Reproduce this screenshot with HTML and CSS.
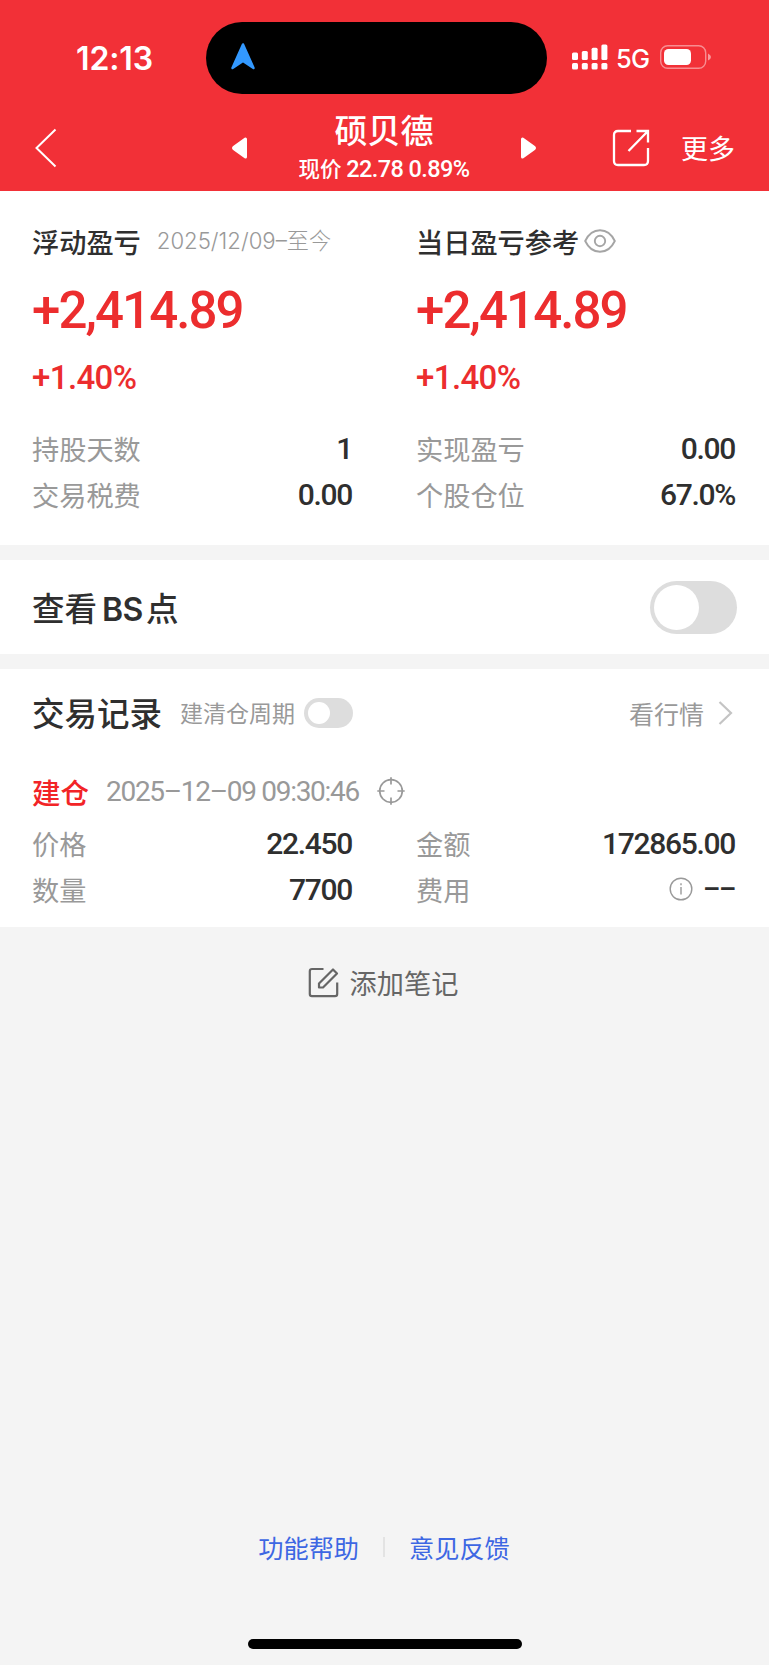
FILE: index.html
```html
<!DOCTYPE html>
<html lang="zh-CN">
<head>
  <meta charset="UTF-8" />
  <meta name="viewport" content="width=device-width, initial-scale=1.0"/>
  <title>硕贝德</title>
  <link rel="stylesheet" href="styles.css">
</head>
<body>

  <!-- Header -->
  <header class="header">
    <div class="status-bar">
      <span class="time">12:13</span>
      <div class="island">
        <svg width="26" height="28" viewBox="0 0 26 28"><path d="M13 2.500 L23.500 26 L13 19 L2.500 26 Z" fill="#3399ff" stroke="#3399ff" stroke-width="2.500" stroke-linejoin="round"/></svg>
      </div>
      <div class="status-right">
        <svg width="36" height="26" viewBox="0 0 36 26" fill="#fff">
          <rect x="0" y="8.500" width="6" height="7.500" rx="1.500"/><rect x="0" y="19" width="6" height="6.500" rx="1.500"/>
          <rect x="9.800" y="7" width="6" height="9" rx="1.500"/><rect x="9.800" y="19" width="6" height="6.500" rx="1.500"/>
          <rect x="19.600" y="3.700" width="6" height="12.300" rx="1.500"/><rect x="19.600" y="19" width="6" height="6.500" rx="1.500"/>
          <rect x="29.400" y="0.500" width="6" height="15.500" rx="1.500"/><rect x="29.400" y="19" width="6" height="6.500" rx="1.500"/>
        </svg>
        <span class="network">5G</span>
        <svg width="52" height="24" viewBox="0 0 52 24">
          <rect x="0.700" y="0.700" width="45" height="22.600" rx="7" fill="none" stroke="#fff" stroke-opacity="0.450" stroke-width="1.400"/>
          <rect x="4" y="4" width="27" height="16" rx="4.500" fill="#fff"/>
          <path d="M48 8.500 Q51 10 51 12 Q51 14 48 15.500 Z" fill="#fff" fill-opacity="0.500"/>
        </svg>
      </div>
    </div>
    <div class="nav">
      <svg class="back" width="24" height="40" viewBox="0 0 24 40"><path d="M21.500 1.500 L2.500 20 L21.500 38.500" fill="none" stroke="#fff" stroke-width="2"/></svg>
      <div class="stock">
        <svg width="18" height="24" viewBox="0 0 18 24"><path d="M14.500 3 V21 L3 12.800 Q2 12 3 11.200 Z" fill="#fff" stroke="#fff" stroke-width="3" stroke-linejoin="round"/></svg>
        <div class="stock-info">
          <h1>硕贝德</h1>
          <p>现价 <span>22.78 0.89%</span></p>
        </div>
        <svg width="18" height="24" viewBox="0 0 18 24"><path d="M3.500 3 V21 L15 12.800 Q16 12 15 11.200 Z" fill="#fff" stroke="#fff" stroke-width="3" stroke-linejoin="round"/></svg>
      </div>
      <div class="nav-right">
        <svg width="38" height="38" viewBox="0 0 38 38" fill="none" stroke="#fff" stroke-width="2.300"><path d="M19 2 H6 Q2 2 2 6 V32 Q2 36 6 36 H32 Q36 36 36 32 V19"/><path d="M24.500 2 H36 V13.500 M36 2 L16.500 22"/></svg>
        <span class="more">更多</span>
      </div>
    </div>
  </header>

  <!-- Profit and loss -->
  <section class="card profit">
    <div class="col">
      <h2 class="profit-title">浮动盈亏 <small>2025/12/09–至今</small></h2>
      <div class="amount">+2,414.89</div>
      <div class="percent">+1.40%</div>
      <div class="row"><span>持股天数</span><b>1</b></div>
      <div class="row"><span>交易税费</span><b>0.00</b></div>
    </div>
    <div class="col">
      <h2 class="profit-title">当日盈亏参考
        <svg class="eye" width="32" height="24" viewBox="0 0 32 24" fill="none" stroke="#a5a5a5" stroke-width="1.900"><path d="M1.200 12 C4.500 5 10 1.200 16 1.200 S27.500 5 30.800 12 C27.500 19 22 22.800 16 22.800 S4.500 19 1.200 12 Z"/><circle cx="16" cy="12" r="5.200"/></svg>
      </h2>
      <div class="amount">+2,414.89</div>
      <div class="percent">+1.40%</div>
      <div class="row"><span>实现盈亏</span><b>0.00</b></div>
      <div class="row"><span>个股仓位</span><b>67.0%</b></div>
    </div>
  </section>

  <!-- BS points -->
  <section class="card bs">
    <h2>查看<span class="latin">BS</span>点</h2>
    <div class="toggle"></div>
  </section>

  <!-- Trade records -->
  <section class="card records">
    <div class="records-head">
      <h2>交易记录</h2>
      <span class="cycle">建清仓周期</span>
      <div class="toggle toggle-small"></div>
      <a class="quotes">看行情
        <svg width="15" height="26" viewBox="0 0 15 26"><path d="M1.500 2 L13 13 L1.500 24" fill="none" stroke="#c4c4c4" stroke-width="2.200"/></svg>
      </a>
    </div>
    <div class="trade-head">
      <strong>建仓</strong>
      <time>2025<i>–</i>12<i>–</i>09 09:30:46</time>
      <svg width="28" height="28" viewBox="0 0 28 28" fill="none" stroke="#999" stroke-width="1.700"><circle cx="14" cy="14" r="11.300"/><path d="M14 0.300 V7.500 M14 20.500 V27.700 M0.300 14 H7.500 M20.500 14 H27.700"/></svg>
    </div>
    <div class="trade">
      <div class="row"><span>价格</span><b>22.450</b></div>
      <div class="row"><span>金额</span><b>172865.00</b></div>
      <div class="row"><span>数量</span><b>7700</b></div>
      <div class="row"><span>费用</span>
        <div class="fee">
          <svg width="24" height="24" viewBox="0 0 24 24" fill="none" stroke="#999" stroke-width="1.400"><circle cx="12" cy="12" r="10.800"/><path d="M12 10 V17.500 M12 6.300 V8.200"/></svg>
          <b class="dash">––</b>
        </div>
      </div>
    </div>
  </section>

  <a class="add-note">
    <svg width="31" height="31" viewBox="0 0 31 31" fill="none" stroke="#666" stroke-width="2.200"><path d="M15.500 2 H4 Q1.800 2 1.800 4.200 V27 Q1.800 29.200 4 29.200 H27 Q29.200 29.200 29.200 27 V15.500"/><path d="M11 20.500 V16.500 L25 2.500 L29 6.500 L15 20.500 Z" stroke-linejoin="round"/></svg>
    添加笔记
  </a>

  <footer class="footer">
    <div class="links">
      <a>功能帮助</a>
      <span class="divider"></span>
      <a>意见反馈</a>
    </div>
    <div class="home-bar"></div>
  </footer>

</body>
</html>
```
FILE: styles.css
```css
* {
  box-sizing: border-box;
}

body {
  margin: 0;
  height: 1665px;
  display: flex;
  flex-direction: column;
  background: #f4f4f4;
  color: #2f2f2f;
  font-family: 'Noto Sans CJK SC', sans-serif;
}

h1, h2, p {
  margin: 0;
  font-weight: 500;
}

svg {
  display: block;
  flex: none;
}

/* Header */
.header {
  height: 191px;
  background: #f23037;
  color: white;
}

.status-bar {
  height: 94px;
  padding: 22px 57px 0 76px;
  display: flex;
  align-items: center;
}

.time {
  width: 130px;
  font: 600 32px Inter, sans-serif;
  letter-spacing: -0.1px;
}

.island {
  width: 342px;
  height: 72px;
  padding: 20px 24px;
  border-radius: 36px;
  background: black;
}

.status-right {
  flex: 1;
  margin: -2px 0 0 25px;
  display: flex;
  align-items: center;
}

.network {
  width: 52px;
  padding: 2px 0 0 8px;
  font: 500 25.5px Inter, sans-serif;
  letter-spacing: -0.8px;
}

.nav {
  height: 97px;
  padding: 0 34px;
  display: grid;
  grid-template-columns: 197px 306px 1fr;
  align-items: center;
}

.back {
  margin-top: 10px;
}

.stock {
  display: flex;
  justify-content: space-between;
  align-items: center;
}

.stock > svg {
  margin-top: 10px;
}

.stock-info {
  padding-top: 6px;
  text-align: center;
}

.stock-info h1 {
  font-size: 33px;
  line-height: 44px;
}

.stock-info p {
  font-size: 21.5px;
  line-height: 34px;
}

.stock-info span {
  font: 500 23.5px Roboto, sans-serif;
  letter-spacing: -0.6px;
}

.nav-right {
  margin: 10px 0 0 75px;
  display: flex;
  align-items: center;
  justify-content: space-between;
}

.more {
  font-size: 27px;
  line-height: 38px;
}

/* Cards */
.card {
  margin-bottom: 15px;
  padding: 0 32px;
  background: white;
}

.profit {
  height: 354px;
  padding-top: 24px;
  display: grid;
  grid-template-columns: 321px 320px;
  column-gap: 63px;
}

.profit-title {
  height: 52px;
  display: flex;
  align-items: center;
  font-size: 27.2px;
}

.profit-title small {
  margin-left: 16px;
  color: #999;
  font: 300 22.2px/30px Inter, 'Noto Sans CJK SC', sans-serif;
}

.eye {
  margin-left: 5px;
}

.amount, .percent {
  color: #ec2d2e;
  font-family: Roboto, sans-serif;
  font-weight: 500;
}

.amount {
  font-size: 51px;
  line-height: 88px;
  letter-spacing: -1.9px;
}

.percent {
  margin-bottom: 24px;
  font-size: 33px;
  line-height: 46px;
  letter-spacing: -0.6px;
}

.row {
  height: 46px;
  display: flex;
  align-items: center;
  justify-content: space-between;
}

.row span {
  color: #999;
  font-size: 27.2px;
}

.row b {
  margin-right: 1px;
  font: 500 30px Roboto, sans-serif;
  letter-spacing: -1.3px;
}

/* Toggle switch */
.toggle {
  width: 87px;
  height: 53px;
  padding: 4px;
  border-radius: 27px;
  background: #ddd;
}

.toggle::before {
  content: "";
  display: block;
  width: 45px;
  height: 45px;
  border-radius: 50%;
  background: white;
}

.toggle-small {
  width: 49px;
  height: 30px;
}

.toggle-small::before {
  width: 22px;
  height: 22px;
}

.bs {
  height: 94px;
  display: flex;
  align-items: center;
  justify-content: space-between;
}

.bs h2, .records h2 {
  margin-top: -2px;
  font-size: 32.5px;
}

.latin {
  margin: 0 3px 0 5px;
  font: 600 32px Inter, sans-serif;
  letter-spacing: -0.5px;
}

/* Trade records */
.records {
  height: 258px;
  margin-bottom: 0;
}

.records-head {
  height: 87px;
  display: flex;
  align-items: center;
}

.cycle {
  margin: -2px 9px 0 18px;
  color: #999;
  font-size: 23px;
}

.quotes {
  margin-left: auto;
  padding-right: 4px;
  display: flex;
  align-items: center;
  gap: 14px;
  color: #999;
  font-size: 25px;
  line-height: 34px;
}

.trade-head {
  height: 64px;
  padding-top: 6px;
  display: flex;
  align-items: center;
}

.trade-head strong {
  color: #f22427;
  font-size: 28.5px;
  font-weight: 500;
}

.trade-head time {
  margin: 0 18px 0 17px;
  color: #999;
  font: 400 28px Roboto, sans-serif;
  letter-spacing: -1.3px;
}

.trade-head i {
  font-style: normal;
}

.trade {
  display: grid;
  grid-template-columns: 321px 320px;
  column-gap: 63px;
}

.fee {
  display: flex;
  align-items: center;
  gap: 10px;
}

.fee .dash {
  font-size: 27px;
}

.add-note {
  padding: 35px 3px 0 0;
  display: flex;
  align-items: center;
  justify-content: center;
  gap: 11px;
  color: #666;
  font-size: 27.2px;
}

/* Footer */
.footer {
  margin-top: auto;
  padding-bottom: 16px;
}

.links {
  margin-bottom: 74px;
  padding-right: 1px;
  display: flex;
  align-items: center;
  justify-content: center;
  gap: 24px;
  color: #3d67e3;
  font-size: 25.2px;
}

.divider {
  width: 2px;
  height: 20px;
  background: #e3e3e3;
}

.home-bar {
  width: 274px;
  height: 10px;
  margin: 0 auto;
  border-radius: 5px;
  background: black;
}
```
